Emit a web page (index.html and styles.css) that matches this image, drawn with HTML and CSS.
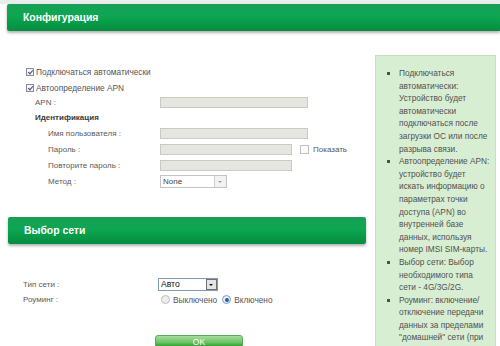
FILE: index.html
```html
<!DOCTYPE html>
<html lang="ru">
<head>
  <meta charset="UTF-8" />
  <title>Конфигурация</title>
  <link rel="stylesheet" href="styles.css">
</head>
<body>
  <div class="top-strip"></div>
  <div class="bar bar-top"><span>Конфигурация</span></div>

  <div class="layout">
    <div class="main">
      <div class="form">
        <div class="row row-check">
          <span class="check checked"></span><span class="check-label">Подключаться автоматически</span>
        </div>
        <div class="row row-check">
          <span class="check checked"></span><span class="check-label">Автоопределение APN</span>
        </div>
        <div class="row row-apn">
          <span class="label">APN :</span><span class="field"></span>
        </div>
        <div class="row">
          <span class="group-title">Идентификация</span>
        </div>
        <div class="row">
          <span class="label sub">Имя пользователя :</span><span class="field"></span>
        </div>
        <div class="row">
          <span class="label sub">Пароль :</span><span class="field short"></span>
          <span class="check blank"></span><span class="show-label">Показать</span>
        </div>
        <div class="row">
          <span class="label sub">Повторите пароль :</span><span class="field short"></span>
        </div>
        <div class="row">
          <span class="label sub">Метод :</span>
          <span class="select select-none">None<span class="arrow"></span></span>
        </div>
      </div>

      <div class="bar bar-net"><span>Выбор сети</span></div>

      <div class="net">
        <div class="row">
          <span class="label net-label">Тип сети :</span>
          <span class="select select-auto">Авто<span class="arrow dark"></span></span>
        </div>
        <div class="row">
          <span class="label net-label">Роуминг :</span>
          <span class="radios">
            <span class="radio"></span><span class="radio-label">Выключено</span>
            <span class="radio on"></span><span class="radio-label">Включено</span>
          </span>
        </div>
      </div>

      <div class="actions">
        <span class="btn-ok">OK</span>
      </div>
    </div>

    <div class="help">
      <ul>
        <li>Подключаться автоматически: Устройство будет автоматически подключаться после загрузки ОС или после разрыва связи.</li>
        <li>Автоопределение APN: устройство будет искать информацию о параметрах точки доступа (APN) во внутренней базе данных, используя номер IMSI SIM-карты.</li>
        <li>Выбор сети: Выбор необходимого типа сети - 4G/3G/2G.</li>
        <li>Роуминг: включение/ отключение передачи данных за пределами "домашней" сети (при нахождении в роуминге).</li>
      </ul>
    </div>
  </div>
</body>
</html>
```

FILE: styles.css
```css
body {
  margin: 0;
  width: 500px;
  height: 346px;
  overflow: hidden;
  background: #ffffff;
  font-family: 'Liberation Sans', Arial, sans-serif;
  font-size: 8px;
  color: #5a5a5a;
}

.top-strip {
  height: 4px;
  background: #eaedeb;
}

/* Зелёные заголовки */
.bar {
  height: 27px;
  background: linear-gradient(#17a055 0%, #0ea653 45%, #08a04b 60%, #078c40 100%);
  border-radius: 2px 0 0 2px;
  box-shadow: 0 2px 3px rgba(0, 0, 0, 0.3);
  display: flex;
  align-items: center;
  color: #ffffff;
  font-weight: bold;
  font-size: 10.4px;
}

.bar span {
  padding-left: 16px;
}

.bar-top {
  margin-left: 7px;
}

.bar-net {
  margin-left: 8px;
  border-radius: 2px;
}

.layout {
  display: flex;
  align-items: flex-start;
}

.main {
  width: 366px;
}

/* Форма */
.form {
  padding: 33px 0 0 26px;
  height: 153px;
}

.row {
  display: flex;
  align-items: center;
  height: 16px;
}

.row-apn {
  height: 13px;
}

.check {
  width: 8px;
  height: 8px;
  border: 1px solid #8c8c8c;
  background: #f4f4f4;
  margin-right: 2px;
  position: relative;
  box-sizing: border-box;
}

.check.checked::after {
  content: "";
  position: absolute;
  left: 2px;
  top: 0;
  width: 2px;
  height: 4px;
  border: solid #2a4fa0;
  border-width: 0 1.5px 1.5px 0;
  transform: rotate(40deg);
}

.check.blank {
  width: 9px;
  height: 9px;
  border-color: #c0c0c0;
  background: #fbfbfb;
  margin: 0 4px 0 8px;
}

.check-label {
  color: #555555;
  font-size: 8.3px;
}

.label {
  width: 134px;
  padding-left: 9px;
  box-sizing: border-box;
}

.label.sub {
  padding-left: 22px;
}

.group-title {
  padding-left: 9px;
  font-weight: bold;
  color: #3a3a3a;
}

.field {
  width: 148px;
  height: 11px;
  background: #e6e6e0;
  border: 1px solid #cacac4;
  box-sizing: border-box;
}

.field.short {
  width: 132px;
}

.show-label {
  color: #555555;
}

/* Выпадающие списки */
.select {
  position: relative;
  height: 13px;
  border: 1px solid #c4c4c4;
  box-sizing: border-box;
  background: #ffffff;
  padding-left: 2px;
  line-height: 11px;
}

.select-none {
  width: 67px;
  color: #444444;
}

.select-auto {
  width: 60px;
  border-color: #7f9db9;
  color: #111111;
  font-size: 8.6px;
}

.arrow {
  position: absolute;
  right: 0;
  top: 0;
  width: 11px;
  height: 11px;
  border-left: 1px solid #d0d0d0;
  background: #f2f2f2;
}

.arrow::after {
  content: "";
  position: absolute;
  left: 3px;
  top: 5px;
  border: 2px solid transparent;
  border-top: 2px solid #a0a0a0;
}

.arrow.dark {
  border: 1px solid #707070;
  box-sizing: border-box;
  background: #e4e4e4;
}

.arrow.dark::after {
  left: 2px;
  top: 4px;
  border-top-color: #111111;
}

/* Выбор сети */
.net {
  padding: 33px 0 0 23px;
}

.net .row {
  height: 15px;
}

.net-label {
  padding-left: 0;
  width: 135px;
}

.radios {
  display: flex;
  align-items: center;
  padding-left: 3px;
}

.radio {
  width: 7px;
  height: 7px;
  border-radius: 50%;
  border: 1px solid #bdbdbd;
  background: #eeeeee;
  margin: 0 3px 0 0;
  position: relative;
}

.radio.on {
  border-color: #7a9cc8;
  margin-left: 5px;
}

.radio.on::after {
  content: "";
  position: absolute;
  left: 1.5px;
  top: 1.5px;
  width: 4px;
  height: 4px;
  border-radius: 50%;
  background: #1d5fae;
}

.radio-label {
  font-size: 8.3px;
  color: #555555;
}

.actions {
  padding: 28px 0 0 155px;
}

.btn-ok {
  display: block;
  width: 88px;
  height: 16px;
  border-radius: 3px 3px 0 0;
  background: linear-gradient(#a6dd9c 0%, #6cc465 45%, #35a530 70%, #1f9a1d 100%);
  border: 1px solid #5daa57;
  box-sizing: border-box;
  color: #ffffff;
  text-align: center;
  line-height: 13px;
  font-size: 8.5px;
}

/* Панель подсказок */
.help {
  width: 121px;
  height: 320px;
  margin: 24px 0 0 9px;
  background: #d8eed3;
  border: 1px solid #c4e0bd;
  box-sizing: border-box;
}

.help ul {
  margin: 0;
  padding: 11px 5px 0 23px;
  list-style: square;
}

.help li {
  line-height: 12.6px;
  color: #505050;
  font-size: 8.3px;
}
```
